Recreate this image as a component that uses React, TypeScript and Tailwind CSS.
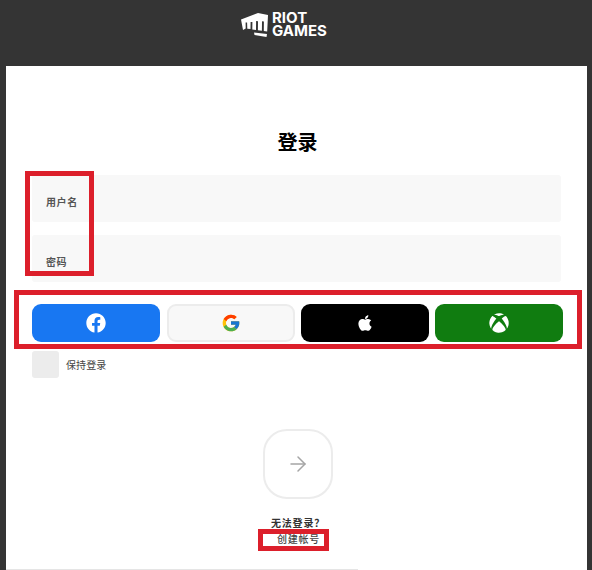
import { ArrowRight } from 'lucide-react';
import { FaApple, FaFacebook, FaXbox } from 'react-icons/fa';
import { FcGoogle } from 'react-icons/fc';

const cjk = "font-['Inter','Noto_Sans_CJK_SC',sans-serif]";

function Fist() {
  return (
    <svg width="28" height="25" viewBox="0 0 28 25" fill="white">
      <path d="M0 7.5 17 1l10 2-.8 16.5-3.4-.5.1-9.5-1.9-.2-.1 9.4-4-.5.1-9-1.9-.1-.1 8.8-3.7-.5.1-7.4-1.8-.1-.1 7.2-3.2-.4-.2-6.2-1.5-.1.1 6.1L2 18z" />
      <path d="M13 20.5l13 1.5-.5 3L13.5 23z" />
    </svg>
  );
}

export default function App() {
  return (
    <div className={`relative h-[570px] w-[592px] overflow-hidden bg-[#343434] ${cjk}`}>
      {/* Header */}
      <div className="flex h-[66px] pt-[12px] pl-[241px]">
        <div className="flex h-[28px] items-start gap-[3px]">
          <Fist />
          <div className="flex flex-col gap-[1px] text-[15px] leading-[12px] font-bold text-white">
            <div>RIOT</div>
            <div>GAMES</div>
          </div>
        </div>
      </div>

      {/* Panel */}
      <div className="mr-[5px] ml-[6px] flex h-[504px] flex-col bg-white pl-[26px]">
        <h1 className="mt-[63px] w-[531px] text-center text-[20px] leading-[28px] font-bold text-black">
          登录
        </h1>

        <div className="mt-[18px] flex h-[47px] w-[529px] items-center rounded-[3px] bg-[#f8f8f8] pt-[8px] pl-[14px] text-[10px] font-bold tracking-[0.6px] text-[#555]">
          用户名
        </div>
        <div className="mt-[13px] flex h-[47px] w-[529px] items-center rounded-[3px] bg-[#f8f8f8] pt-[8px] pl-[14px] text-[10px] font-bold tracking-[0.6px] text-[#555]">
          密码
        </div>

        {/* Social sign-in */}
        <div className="mt-[22px] flex h-[38px] w-[531px] gap-[6px]">
          <div className="flex w-[128px] items-center justify-center rounded-[9px] bg-[#1877f2] text-white">
            <FaFacebook size={20} />
          </div>
          <div className="ml-[1px] flex w-[128px] items-center justify-center rounded-[9px] border-2 border-[#ececec] bg-[#f8f8f8]">
            <FcGoogle size={20} />
          </div>
          <div className="flex w-[128px] items-center justify-center rounded-[9px] bg-black text-white">
            <FaApple size={18} />
          </div>
          <div className="flex w-[128px] items-center justify-center rounded-[9px] bg-[#107c10] text-white">
            <FaXbox size={20} />
          </div>
        </div>

        <div className="mt-[9px] flex items-center gap-[7px]">
          <div className="h-[27px] w-[27px] rounded-[3px] bg-[#ececec]" />
          <span className="pt-[2px] text-[10px] tracking-[0.1px] text-[#444]">保持登录</span>
        </div>

        <div className="mt-[51px] ml-[231px] flex h-[70px] w-[70px] items-center justify-center rounded-[24px] border-2 border-[#ececec] bg-white text-[#a5a5a5]">
          <ArrowRight size={24} strokeWidth={1.5} />
        </div>

        <div className="mt-[17px] w-[532px] text-center text-[10px] leading-[14px] font-bold tracking-[0.8px] text-[#333]">
          无法登录？
        </div>
        <div className="mt-[2px] w-[533px] text-center text-[10px] leading-[14px] font-medium tracking-[0.8px] text-[#444]">
          创建帐号
        </div>

        <div className="mt-auto ml-[-26px] h-px w-[352px] bg-[#e5e5e5]" />
      </div>

      {/* Red annotation boxes */}
      <div className="absolute top-[171px] left-[25px] h-[105px] w-[69px] border-[5px] border-[#dc1f2b]" />
      <div className="absolute top-[290px] left-[14px] h-[59px] w-[568px] border-[5px] border-[#dc1f2b]" />
      <div className="absolute top-[529px] left-[258px] h-[22px] w-[71px] border-[5px] border-[#dc1f2b]" />
    </div>
  );
}
